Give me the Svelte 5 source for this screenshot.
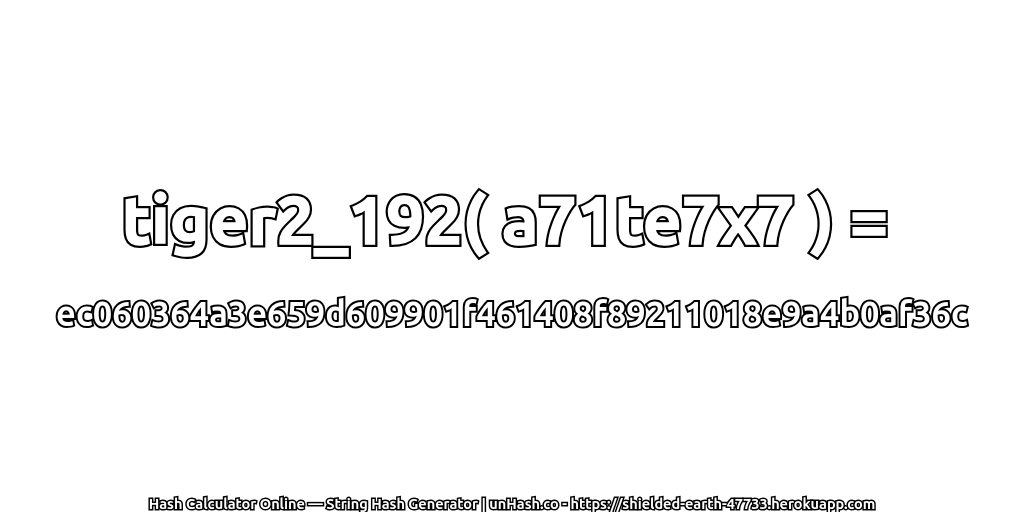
<script lang="ts">
	let title = 'tiger2_192( a71te7x7 ) =';
	let hash = 'ec060364a3e659d609901f461408f89211018e9a4b0af36c';
	let footer = 'Hash Calculator Online — String Hash Generator | unHash.co - https://shielded-earth-47733.herokuapp.com';
</script>

<div class="page">
	<main class="result">
		<h1 data-text={title}>{title}</h1>
		<p class="hash">{hash}</p>
	</main>
	<footer>{footer}</footer>
</div>

<style>
	:global(body) {
		background: #fff;
	}

	.page {
		width: 1024px;
		height: 512px;
		display: flex;
		flex-direction: column;
		align-items: center;
		font-family: "Ubuntu", "Noto Sans", "DejaVu Sans", sans-serif;
		font-weight: 700;
		color: #fff;
		overflow: hidden;
		will-change: transform; /* grayscale text edges */
	}

	.result {
		flex: 1;
		display: flex;
		flex-direction: column;
		align-items: center;
		padding-top: 181px;
	}

	h1 {
		position: relative;
		margin: 0;
		padding-right: 14px;
		font-size: 67.6px;
		font-weight: 700;
		line-height: 76px;
		white-space: nowrap;
		-webkit-text-stroke: 6px #000;
		paint-order: stroke fill;
	}

	/* white inner stroke on top, keeps the black outline thin */
	h1::after {
		content: attr(data-text);
		position: absolute;
		left: 0;
		top: 0;
		-webkit-text-stroke: 1.5px #fff;
	}

	.hash {
		margin: 37px 0 0;
		font-size: 34.4px;
		line-height: 40px;
		white-space: nowrap;
		-webkit-text-stroke: 4px #000;
		paint-order: stroke fill;
	}

	footer {
		font-size: 14.5px;
		line-height: 16px;
		white-space: nowrap;
		-webkit-text-stroke: 3px #000;
		paint-order: stroke fill;
	}
</style>
